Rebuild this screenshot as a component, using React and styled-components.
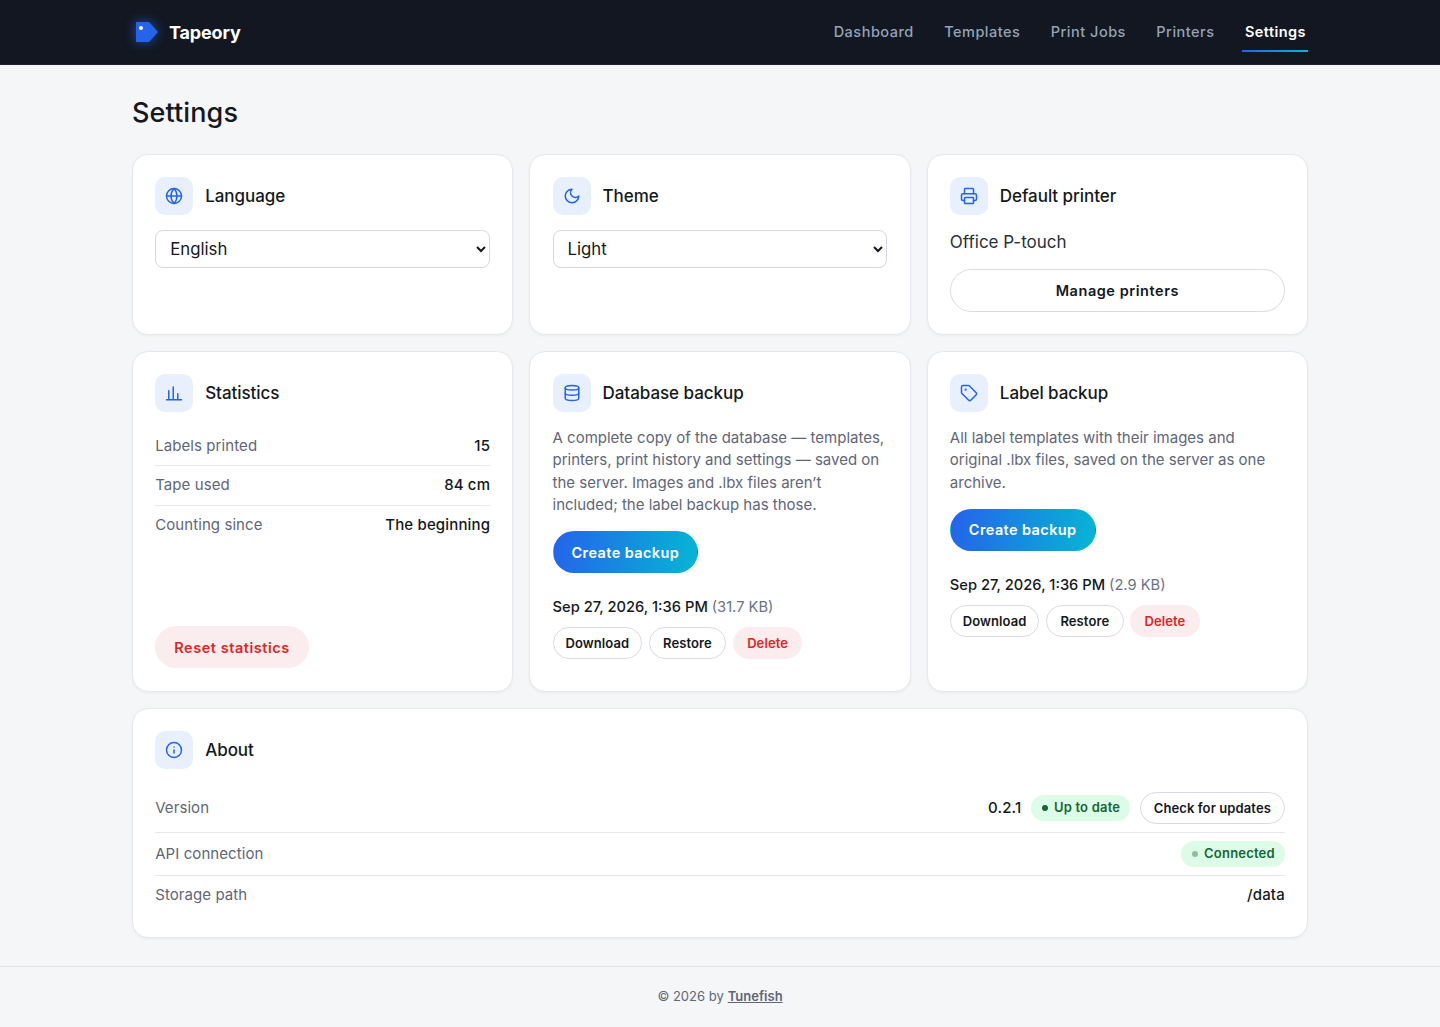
import React from 'react';
import styled, { createGlobalStyle } from 'styled-components';
import { Globe, Printer, Database, Tag, Info } from 'lucide-react';

const display = `'Inter', 'Liberation Sans', sans-serif`;

const GlobalStyle = createGlobalStyle`
  * { box-sizing: border-box; }
  html, body { margin: 0; padding: 0; }
  body {
    background: #f5f6f8;
    color: #141821;
    font-family: 'Inter', 'Liberation Sans', sans-serif;
    font-size: 15px;
    line-height: 1.5;
  }
`;

const Nav = styled.header`
  height: 65px;
  background: #121721;
  border-bottom: 1px solid #1f2531;
`;

const NavInner = styled.div`
  width: 1176px;
  height: 64px;
  margin: 0 auto;
  display: flex;
  align-items: center;
  justify-content: space-between;
`;

const Brand = styled.div`
  display: flex;
  align-items: center;
  gap: 11px;
  padding-left: 4px;
  font-family: ${display};
  font-size: 18px;
  font-weight: 700;
  letter-spacing: -0.15px;
  color: #fff;
  svg { filter: drop-shadow(0 0 6px rgba(37, 99, 235, .7)); }
`;

const Links = styled.nav`
  display: flex;
  align-items: center;
  gap: 30.4px;
  margin-right: 2px;
`;

const NavLink = styled.a`
  position: relative;
  display: block;
  height: 40px;
  line-height: 40px;
  font-family: ${display};
  font-size: 14.5px;
  font-weight: ${p => (p.$active ? 600 : 500)};
  letter-spacing: ${p => (p.$active ? 0.45 : 0.5)}px;
  color: ${p => (p.$active ? '#fff' : '#94a3b8')};
  &::after {
    content: '';
    display: ${p => (p.$active ? 'block' : 'none')};
    position: absolute;
    left: -3px;
    right: -2px;
    bottom: 0;
    height: 2px;
    background: linear-gradient(90deg, #2563eb, #06b6d4);
  }
`;

const Main = styled.main`
  width: 1176px;
  margin: 0 auto;
  padding: 28px 0;
`;

const Title = styled.h1`
  margin: 0 0 21px;
  font-family: ${display};
  font-size: 27px;
  line-height: 40px;
  font-weight: 500;
  letter-spacing: 0.1px;
`;

const Grid = styled.div`
  display: grid;
  grid-template-columns: repeat(3, minmax(0, 1fr));
  grid-template-rows: 181px 341px 230px;
  gap: 16px;
`;

const Card = styled.section`
  grid-column: ${p => p.$span || 'auto'};
  display: flex;
  flex-direction: column;
  padding: 22.4px 22.2px 23px;
  background: #fff;
  border: 1px solid #e6e8ef;
  border-radius: 16px;
  box-shadow: 0 1px 3px rgba(20, 24, 33, .05);
`;

const CardHead = styled.div`
  flex: none;
  display: flex;
  align-items: center;
  gap: 12px;
  margin-bottom: 14.4px;
  font-family: ${display};
  font-size: 17px;
  font-weight: 550;
  letter-spacing: -0.05px;
  span:last-child { padding-top: 1px; }
`;

const IconBox = styled.span`
  flex: none;
  width: 38px;
  height: 38px;
  display: flex;
  align-items: center;
  justify-content: center;
  border-radius: 10px;
  background: #e8effd;
  color: #2563eb;
`;

const Select = styled.select`
  flex: none;
  width: 100%;
  height: 38px;
  padding: 0 10px;
  background: #fff;
  border: 1px solid #d5d8e4;
  border-radius: 8px;
  color: #141821;
  font-family: 'Inter', sans-serif;
  font-size: 16.8px;
`;

const Plain = styled.div`
  flex: none;
  font-size: 17px;
  line-height: 24px;
  margin: 0 0 15px;
  color: #2a2f3a;
`;

const Button = styled.button`
  flex: none;
  display: inline-flex;
  align-items: center;
  justify-content: center;
  align-self: ${p => (p.$wide ? 'stretch' : 'flex-start')};
  width: ${p => (p.$w ? `${p.$w}px` : 'auto')};
  height: ${p => (p.$small ? 32 : p.$wide ? 43 : 42)}px;
  padding: 0 ${p => (p.$small ? 0 : 18)}px;
  border-radius: 999px;
  border: 1px solid ${p => (p.$variant === 'outline' ? '#d9dbe6' : 'transparent')};
  background: ${p =>
    p.$variant === 'primary'
      ? 'linear-gradient(100deg, #2563eb, #06b6d4)'
      : p.$variant === 'danger'
        ? '#fbecee'
        : '#fff'};
  color: ${p =>
    p.$variant === 'primary' ? '#fff' : p.$variant === 'danger' ? '#dc2626' : '#141821'};
  font-family: ${display};
  font-size: ${p => (p.$small ? 13 : 14.5)}px;
  font-weight: 600;
  letter-spacing: ${p => (p.$small ? 0.1 : p.$variant === 'primary' ? 0.4 : 0.55)}px;
  white-space: nowrap;
`;

const StatRow = styled.div`
  flex: none;
  display: flex;
  align-items: center;
  justify-content: space-between;
  height: ${p => p.$h || 39.5}px;
  border-bottom: ${p => (p.$last ? 'none' : '1px solid #e6e8ef')};
`;

const StatLabel = styled.span`
  color: #5f6679;
  font-size: 15px;
  letter-spacing: 0.08px;
`;

const StatValue = styled.span`
  display: flex;
  align-items: center;
  gap: 9.6px;
  font-family: ${display};
  font-size: 15px;
  font-weight: 500;
  letter-spacing: 0.15px;
  color: #141821;
`;

const Spacer = styled.div`
  flex: 1;
`;

const Text = styled.p`
  margin: 0 0 14.8px;
  color: #5f6679;
  font-size: 15px;
  line-height: 22.4px;
`;

const BackupDate = styled.div`
  margin-top: 23px;
  font-size: 14.7px;
  line-height: 22px;
  font-weight: 500;
  color: #141821;
  span { font-weight: 400; color: #6b7285; }
`;

const ActionRow = styled.div`
  display: flex;
  gap: 6.6px;
  margin-top: 9px;
`;

const Pill = styled.span`
  display: inline-flex;
  align-items: center;
  gap: 6px;
  height: 26px;
  padding: 0 10px 0 11px;
  border-radius: 999px;
  background: #dcfce7;
  color: #166534;
  font-family: ${display};
  font-size: 13px;
  font-weight: 600;
  letter-spacing: 0.2px;
  &::before {
    content: '';
    width: 6px;
    height: 6px;
    border-radius: 50%;
    background: #166534;
    opacity: ${p => (p.$dim ? 0.4 : 1)};
  }
`;

const Footer = styled.footer`
  height: 61px;
  display: flex;
  align-items: center;
  justify-content: center;
  gap: 4px;
  border-top: 1px solid #e2e4ea;
  color: #5f6679;
  font-size: 13px;
  a { color: #5f6679; font-weight: 600; text-decoration: underline; }
`;

const Logo = () => (
  <svg width="22" height="20" viewBox="0 0 22 20">
    <path d="M0 0h13l9 10-9 10H0z" fill="#2563eb" />
    <circle cx="5" cy="6" r="2" fill="#fff" />
  </svg>
);

const Glyph = ({ d }) => (
  <svg width="18" height="18" viewBox="0 0 24 24" fill="none" stroke="currentColor" strokeWidth="2" strokeLinecap="round" strokeLinejoin="round">
    <path d={d} />
  </svg>
);

const Moon = () => <Glyph d="M12 3a6 6 0 0 0 9 9 9 9 0 1 1-9-9Z" />;
const Bars = () => <Glyph d="M2 21h20M5 21V9M11 21V4M17 21v-8" />;

const head = (icon, title) => (
  <CardHead>
    <IconBox>{icon}</IconBox>
    <span>{title}</span>
  </CardHead>
);

const Backup = ({ icon, title, text, date, size }) => (
  <Card>
    {head(icon, title)}
    <Text>{text}</Text>
    <Button $variant="primary">Create backup</Button>
    <BackupDate>{date} <span>({size})</span></BackupDate>
    <ActionRow>
      <Button $small $w={89.6} $variant="outline">Download</Button>
      <Button $small $w={77.6} $variant="outline">Restore</Button>
      <Button $small $w={69.4} $variant="danger">Delete</Button>
    </ActionRow>
  </Card>
);

const App = () => (
  <>
    <GlobalStyle />
    <Nav>
      <NavInner>
        <Brand><Logo />Tapeory</Brand>
        <Links>
          <NavLink>Dashboard</NavLink>
          <NavLink>Templates</NavLink>
          <NavLink>Print Jobs</NavLink>
          <NavLink>Printers</NavLink>
          <NavLink $active>Settings</NavLink>
        </Links>
      </NavInner>
    </Nav>
    <Main>
      <Title>Settings</Title>
      <Grid>
        <Card>
          {head(<Globe size={18} />, 'Language')}
          <Select defaultValue="en"><option value="en">English</option></Select>
        </Card>
        <Card>
          {head(<Moon />, 'Theme')}
          <Select defaultValue="light"><option value="light">Light</option></Select>
        </Card>
        <Card>
          {head(<Printer size={18} />, 'Default printer')}
          <Plain>Office P-touch</Plain>
          <Button $wide $variant="outline">Manage printers</Button>
        </Card>
        <Card>
          {head(<Bars />, 'Statistics')}
          <StatRow><StatLabel>Labels printed</StatLabel><StatValue>15</StatValue></StatRow>
          <StatRow><StatLabel>Tape used</StatLabel><StatValue>84 cm</StatValue></StatRow>
          <StatRow $last><StatLabel>Counting since</StatLabel><StatValue>The beginning</StatValue></StatRow>
          <Spacer />
          <Button $variant="danger">Reset statistics</Button>
        </Card>
        <Backup
          icon={<Database size={18} />}
          title="Database backup"
          text="A complete copy of the database — templates, printers, print history and settings — saved on the server. Images and .lbx files aren’t included; the label backup has those."
          date="Sep 27, 2026, 1:36 PM"
          size="31.7 KB"
        />
        <Backup
          icon={<Tag size={18} />}
          title="Label backup"
          text="All label templates with their images and original .lbx files, saved on the server as one archive."
          date="Sep 27, 2026, 1:36 PM"
          size="2.9 KB"
        />
        <Card $span="1 / -1">
          {head(<Info size={18} />, 'About')}
          <StatRow $h={49}>
            <StatLabel>Version</StatLabel>
            <StatValue>
              0.2.1
              <Pill>Up to date</Pill>
              <Button $small $w={145} $variant="outline">Check for updates</Button>
            </StatValue>
          </StatRow>
          <StatRow $h={43}>
            <StatLabel>API connection</StatLabel>
            <StatValue><Pill $dim>Connected</Pill></StatValue>
          </StatRow>
          <StatRow $h={39} $last>
            <StatLabel>Storage path</StatLabel>
            <StatValue>/data</StatValue>
          </StatRow>
        </Card>
      </Grid>
    </Main>
    <Footer>© 2026 by <a>Tunefish</a></Footer>
  </>
);

export default App;
